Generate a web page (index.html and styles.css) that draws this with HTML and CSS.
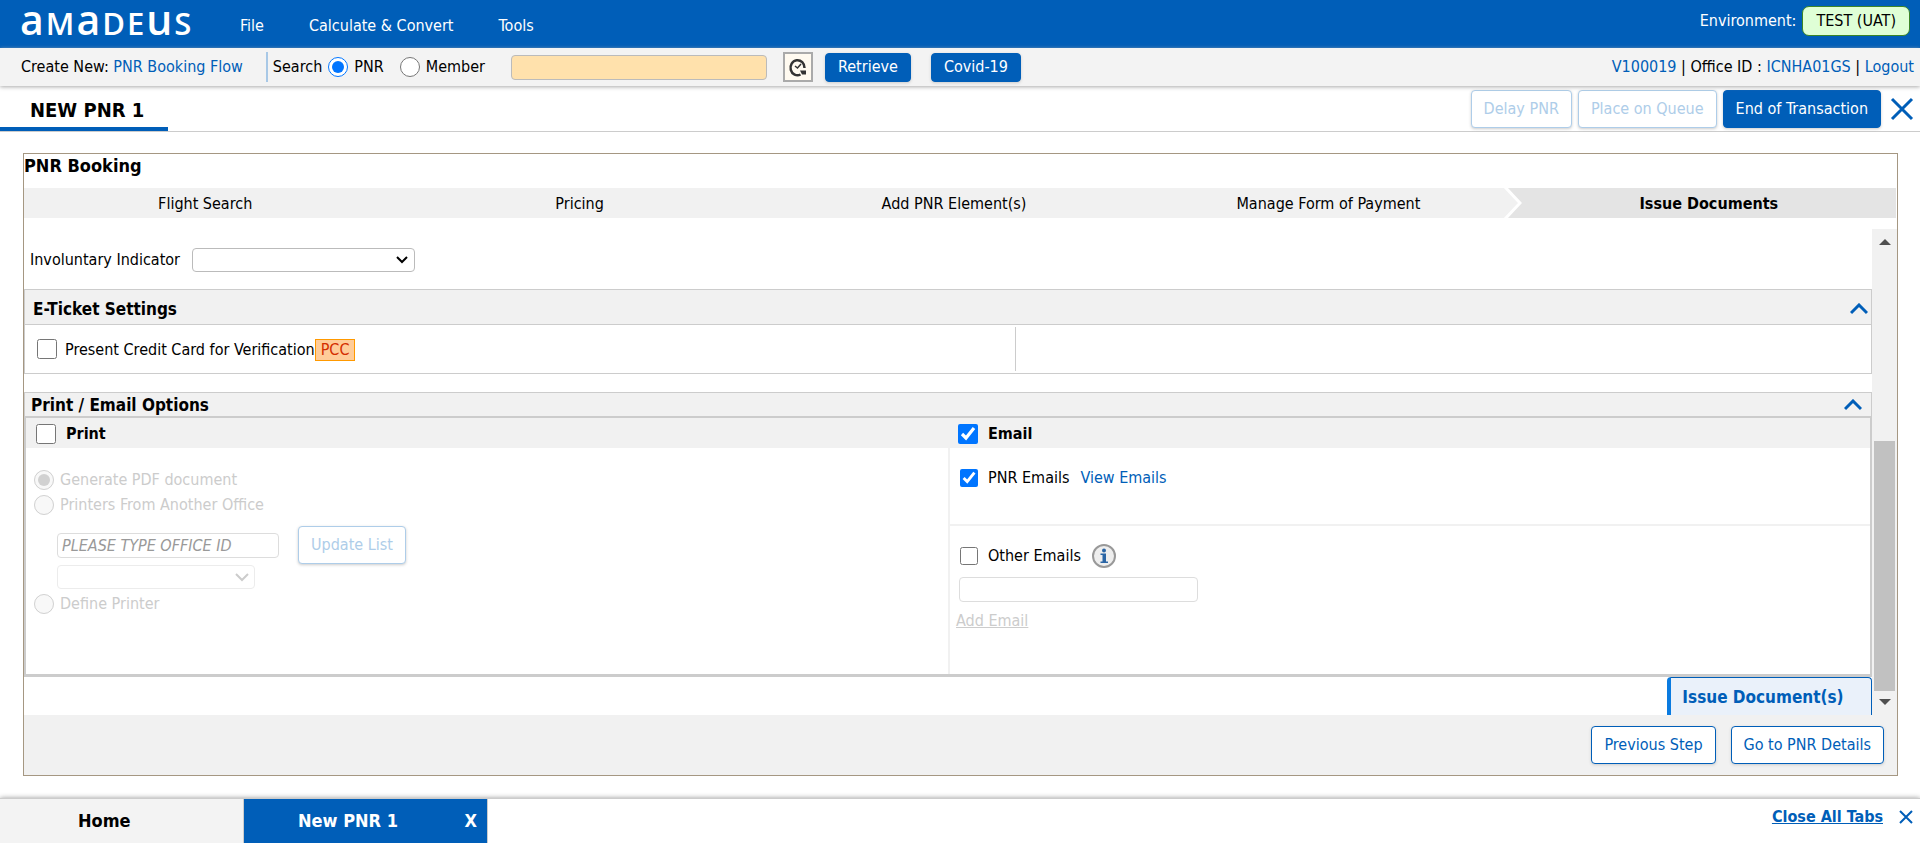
FILE: index.html
```html
<!DOCTYPE html>
<html lang="en">
<head>
<meta charset="utf-8">
<title>New PNR 1</title>
<link rel="stylesheet" href="styles.css">
</head>
<body>
<header class="topbar">
  <div class="logo" role="img" aria-label="amadeus"><span class="tall">a</span><span>M</span><span class="tall">a</span><span>D</span><span>E</span><span class="tall">u</span><span>S</span></div>
  <nav class="menu">
    <a href="#">File</a>
    <a href="#">Calculate &amp; Convert</a>
    <a href="#">Tools</a>
  </nav>
  <div class="env">Environment: <span class="env-badge">TEST (UAT)</span></div>
</header>

<div class="toolbar">
  <div class="create">Create New: <a href="#">PNR Booking Flow</a></div>
  <form class="search">
    <span>Search</span>
    <label class="search-pnr"><input class="radio" type="radio" name="kind" checked> PNR</label>
    <label class="search-member"><input class="radio" type="radio" name="kind"> Member</label>
    <input class="search-box" type="text" aria-label="Search value">
    <button class="recent" type="button" aria-label="Recent searches">
      <svg width="20" height="22" viewBox="0 0 20 22" fill="none" stroke="#333">
        <path d="M12.500 18.500A7 7.500 0 1 1 16.500 12" stroke-width="2.500"/>
        <path d="M7 10l2.500 2 3.500-4" stroke-width="1.500"/>
        <path d="M12 14.500h6v4h-4z" fill="#333" stroke="none"/>
      </svg>
    </button>
    <button class="btn primary small" type="button">Retrieve</button>
    <button class="btn primary small covid" type="button">Covid-19</button>
  </form>
  <div class="account"><a href="#">V100019</a> | Office ID : <a href="#">ICNHA01GS</a> | <a href="#">Logout</a></div>
</div>

<div class="tabrow">
  <h1 class="tab-title">NEW PNR 1</h1>
  <div class="tab-actions">
    <button class="btn" type="button" disabled>Delay PNR</button>
    <button class="btn" type="button" disabled>Place on Queue</button>
    <button class="btn primary" type="button">End of Transaction</button>
    <button class="close" type="button" aria-label="Close PNR">
      <svg width="24" height="24" viewBox="0 0 24 24" stroke="#005eb8" stroke-width="3"><path d="M2 2l20 20M22 2L2 22"/></svg>
    </button>
  </div>
</div>

<main class="panel">
  <h2 class="panel-title">PNR Booking</h2>
  <ol class="steps">
    <li>Flight Search</li>
    <li>Pricing</li>
    <li>Add PNR Element(s)</li>
    <li>Manage Form of Payment</li>
    <li class="current">
      <svg class="step-arrow" width="20" height="30" viewBox="0 0 20 30"><path d="M4 0H20V30H4z" fill="#e4e4e4"/><path d="M0 0H4L18 15 4 30H0z" fill="#f1f1f1"/><path d="M3 -1L18 15 3 31" fill="none" stroke="#fff" stroke-width="3"/></svg>
      Issue Documents
    </li>
  </ol>

  <div class="viewport">
    <div class="content">
      <div class="involuntary">
        <label for="inv">Involuntary Indicator</label>
        <span class="select-wrap wide">
          <select id="inv"><option></option></select>
          <svg width="14" height="10" viewBox="0 0 14 10" fill="none" stroke="#000" stroke-width="2"><path d="M2 2l5 5 5-5"/></svg>
        </span>
      </div>

      <section class="box ticket">
        <div class="box-head">
          <h3>E-Ticket Settings</h3>
          <button class="collapse" type="button" aria-label="Collapse E-Ticket Settings"><svg width="18" height="12" viewBox="0 0 18 12" fill="none" stroke="#005eb8" stroke-width="3"><path d="M1 10l8-8 8 8"/></svg></button>
        </div>
        <div class="ticket-body">
          <label class="pcc-label"><input class="check" type="checkbox"> <span>Present Credit Card for Verification<mark>PCC</mark></span></label>
          <div class="ticket-side"></div>
        </div>
      </section>

      <section class="box options">
        <div class="box-head slim">
          <h3>Print / Email Options</h3>
          <button class="collapse" type="button" aria-label="Collapse Print / Email Options"><svg width="18" height="12" viewBox="0 0 18 12" fill="none" stroke="#005eb8" stroke-width="3"><path d="M1 10l8-8 8 8"/></svg></button>
        </div>
        <div class="columns">
          <div class="col">
            <label class="col-head"><input class="check" type="checkbox"> Print</label>
            <div class="print-body">
              <label class="opt"><input class="radio" type="radio" name="printer" checked disabled> Generate PDF document</label>
              <label class="opt"><input class="radio" type="radio" name="printer" disabled> Printers From Another Office</label>
              <div class="office">
                <div class="office-fields">
                  <input class="field" type="text" placeholder="PLEASE TYPE OFFICE ID" aria-label="Office ID" disabled>
                  <span class="select-wrap narrow">
                    <select aria-label="Printer" disabled><option></option></select>
                    <svg width="14" height="10" viewBox="0 0 14 10" fill="none" stroke="#ccc" stroke-width="2"><path d="M1 2l6 6 6-6"/></svg>
                  </span>
                </div>
                <button class="btn" type="button" disabled>Update List</button>
              </div>
              <label class="opt"><input class="radio" type="radio" name="printer" disabled> Define Printer</label>
            </div>
          </div>
          <div class="col">
            <label class="col-head"><input class="check" type="checkbox" checked> Email</label>
            <div class="email-body">
              <div class="email-row pnr-emails">
                <label><input class="check" type="checkbox" checked> PNR Emails</label>
                <a href="#">View Emails</a>
              </div>
              <div class="other-emails">
                <div class="email-row">
                  <label><input class="check" type="checkbox"> Other Emails</label>
                  <svg width="24" height="24" viewBox="0 0 24 24"><circle cx="12" cy="12" r="11" fill="#eee" stroke="#999" stroke-width="2"/><circle cx="12" cy="6.500" r="2" fill="#2a65a5"/><path d="M8.500 9.500h5.500v8H16V19H8.500v-1.500h2v-6.500h-2z" fill="#2a65a5"/></svg>
                </div>
                <input class="field email-field" type="text" aria-label="Other email" disabled>
                <a class="add-email">Add Email</a>
              </div>
            </div>
          </div>
        </div>
      </section>

      <div class="issue-row"><button class="issue" type="button">Issue Document(s)</button></div>
    </div>

    <div class="scrollbar" aria-hidden="true">
      <svg width="12" height="6" viewBox="0 0 12 6"><path d="M0 6L6 0l6 6z" fill="#505050"/></svg>
      <div class="track"><div class="thumb"></div></div>
      <svg width="12" height="6" viewBox="0 0 12 6"><path d="M0 0h12L6 6z" fill="#505050"/></svg>
    </div>
  </div>

  <div class="panel-foot">
    <button class="btn outline" type="button">Previous Step</button>
    <button class="btn outline" type="button">Go to PNR Details</button>
  </div>
</main>

<footer class="taskbar">
  <a class="task" href="#">Home</a>
  <div class="task active"><a href="#">New PNR 1</a><button type="button" aria-label="Close New PNR 1">X</button></div>
  <div class="task-end">
    <a href="#">Close All Tabs</a>
    <svg width="14" height="14" viewBox="0 0 14 14" stroke="#005eb8" stroke-width="2"><path d="M1 1l12 12M13 1L1 13"/></svg>
  </div>
</footer>
</body>
</html>
```
FILE: styles.css
```css
* { box-sizing: border-box; }
body {
  margin: 0;
  background: #fff;
  color: #000;
  font: 16px/20px "DejaVu Sans Condensed", "Noto Sans", sans-serif;
}
h1, h2, h3, ol { margin: 0; padding: 0; }
a { color: #005eb8; text-decoration: none; }
button, input, select { font: inherit; color: inherit; margin: 0; }
svg { display: block; flex: none; }

/* Top bar */
.topbar {
  display: flex;
  align-items: center;
  height: 48px;
  padding: 0 10px 0 20px;
  background: #005eb8;
  color: #fff;
}
.logo {
  display: flex;
  align-items: baseline;
  gap: 2px;
  width: 220px;
  padding-bottom: 6px;
  font: 600 31px/40px "Open Sans", "Noto Sans", sans-serif;
}
.tall { font-size: 41px; }
.menu { display: flex; gap: 45px; padding-top: 4px; }
.menu a { color: #fff; }
.env { display: flex; align-items: center; gap: 6px; margin-left: auto; padding-bottom: 6px; }
.env-badge {
  padding: 4px 13px;
  border: 1px solid #3c8527;
  border-radius: 7px;
  background: #dfffd6;
  color: #000;
}

/* Search toolbar */
.toolbar {
  display: flex;
  align-items: center;
  height: 38px;
  padding: 0 6px 0 21px;
  background: #f3f3f3;
  box-shadow: 0 1px 4px #aaa;
  position: relative;
}
.create { padding-right: 23px; }
.search { display: flex; align-items: center; height: 30px; padding-left: 5px; border-left: 2px solid #a8c8e6; }
.search label { display: flex; align-items: center; gap: 6px; }
.search-pnr { margin-left: 6px; }
.search-member { margin-left: 16px; }
.search-box {
  width: 256px;
  height: 25px;
  margin-left: 26px;
  border: 1px solid #bbb;
  border-radius: 4px;
  background: #ffe1ac;
}
.recent { margin: 0 12px 0 16px; padding: 2px 3px; border: 2px solid #aaa; background: #fffaf0; }
.account { margin-left: auto; }

.radio, .check { width: 20px; height: 20px; accent-color: #0075ff; flex: none; }

/* Buttons */
.btn {
  height: 38px;
  padding: 0 12px;
  border: 1px solid #005eb8;
  border-radius: 4px;
  background: #fff;
  color: #005eb8;
  box-shadow: 0 1px 3px #ccc;
  white-space: nowrap;
}
.btn.primary { background: #005eb8; color: #fff; }
.btn.small { height: 29px; }
.btn.covid { margin-left: 20px; }
.btn:disabled { border-color: #aecde9; color: #aecde9; }

/* Tab row */
.tabrow { display: flex; justify-content: space-between; height: 46px; border-bottom: 1px solid #ccc; }
.tab-title {
  padding: 14px 24px 0 30px;
  border-bottom: 4px solid #005eb8;
  font-size: 20px;
  line-height: 20px;
}
.tab-actions { display: flex; align-items: center; gap: 6px; padding-right: 3px; }
.close { padding: 3px; border: 0; background: none; }

/* Booking panel */
.panel { margin: 21px 22px 0 23px; border: 1px solid #a59782; }
.panel-title { padding: 2px 0 12px; font-size: 18px; line-height: 20px; }
.steps { display: grid; grid-template-columns: repeat(5, 1fr); padding-right: 1px; list-style: none; text-align: center; }
.steps li { padding: 6px 12px 4px 0; background: #f1f1f1; }
.steps .current { position: relative; padding-right: 0; background: #e4e4e4; font-weight: bold; }
.step-arrow { position: absolute; left: -20px; top: 0; }
.viewport { display: flex; padding-top: 11px; }
.content { flex: 1; min-width: 0; }
.scrollbar {
  display: flex;
  flex-direction: column;
  align-items: center;
  width: 25px;
  padding: 10px 2px;
  background: #f1f1f1;
}
.track { display: flex; flex: 1; align-self: stretch; align-items: flex-end; padding: 8px 0; }
.thumb { width: 100%; height: 57%; background: #c1c1c1; }

.involuntary { display: flex; align-items: center; gap: 12px; padding: 19px 0 17px 6px; }
.select-wrap { position: relative; display: block; }
.select-wrap svg { position: absolute; right: 6px; top: 7px; pointer-events: none; }
.select-wrap select {
  display: block;
  width: 100%;
  height: 24px;
  appearance: none;
  border: 1px solid #bbb;
  border-radius: 4px;
  background: #fff;
}
.wide { width: 223px; }
.narrow { width: 198px; }
.select-wrap select:disabled { border-color: #e4e4e4; }

.box { border: 1px solid #ccc; }
.box h3 { font-size: 17px; line-height: 20px; }
.box-head { display: flex; justify-content: space-between; align-items: center; height: 35px; padding: 3px 3px 0 8px; background: #f1f1f1; border-bottom: 1px solid #ccc; }
.box-head.slim { height: 23px; padding: 0 9px 0 6px; border-bottom: 0; }
.collapse { padding: 0; border: 0; background: none; }
.ticket-body { display: grid; grid-template-columns: 991fr 855fr; height: 48px; padding: 2px 0; }
.pcc-label { display: flex; gap: 8px; padding: 12px 0 0 12px; border-right: 1px solid #ccc; }
.pcc-label span { line-height: 20px; }
mark { display: inline-block; padding: 0 5px; border: 1px solid #f90; background: #fc9; color: #d42e00; }

.options { margin-top: 18px; }
.columns { display: grid; grid-template-columns: 1fr 1fr; border: 1px solid #ccc; border-width: 2px 1px; }
.col-head { display: flex; align-items: center; gap: 10px; height: 30px; padding: 2px 0 0 10px; background: #f1f1f1; font-weight: bold; }
.print-body, .email-body { height: 226px; }
.print-body { padding: 19px 0 0 8px; color: #ccc; }
.opt { display: flex; align-items: center; gap: 6px; height: 25px; }
.office { display: flex; align-items: flex-start; gap: 19px; padding: 9px 0 2px 23px; }
.office-fields { display: grid; gap: 7px; padding-top: 7px; }
.field {
  width: 222px;
  height: 25px;
  padding: 0 4px;
  border: 1px solid #ddd;
  border-radius: 4px;
  background: #fff;
}
.field::placeholder { color: #999; font-style: italic; }
.email-body { border-left: 2px solid #f1f1f1; }
.email-row { display: flex; align-items: center; gap: 11px; }
.email-row label { display: flex; align-items: center; gap: 10px; }
.email-row .check { width: 18px; height: 18px; }
.pnr-emails { height: 78px; padding: 0 0 16px 10px; border-bottom: 2px solid #f1f1f1; }
.other-emails { padding: 18px 0 0 6px; }
.other-emails .email-row { padding-left: 4px; }
.email-field { display: block; width: 239px; margin: 9px 0 9px 3px; }
.add-email { color: #ccc; text-decoration: underline; }

.issue-row { display: flex; justify-content: flex-end; }
.issue {
  width: 205px;
  height: 38px;
  padding: 0 26px 0 10px;
  border: 1px solid #005eb8;
  border-left: 4px solid #0a7be0;
  border-bottom: 0;
  border-radius: 4px 4px 0 0;
  background: #eaf1fa;
  color: #005eb8;
  font-size: 17px;
  font-weight: bold;
  white-space: nowrap;
}
.panel-foot { display: flex; justify-content: flex-end; gap: 15px; height: 60px; padding: 11px 13px; background: #f1f1f1; }

/* Open tabs */
.taskbar { display: flex; height: 45px; margin-top: 22px; border-top: 1px solid #ccc; box-shadow: 0 0 5px #999; font-weight: bold; }
.task {
  display: flex;
  align-items: center;
  width: 244px;
  padding-left: 78px;
  border-right: 1px solid #ccc;
  background: #f3f3f3;
  color: #000;
  font-size: 18px;
}
.task.active { justify-content: space-between; padding: 0 10px 0 54px; background: #005eb8; }
.task.active a, .task.active button { color: #fff; }
.task button { padding: 0; border: 0; background: none; font-weight: bold; }
.task-end { display: flex; flex: 1; justify-content: flex-end; align-items: center; gap: 16px; padding: 0 7px 8px 0; }
.task-end a { text-decoration: underline; }
```
